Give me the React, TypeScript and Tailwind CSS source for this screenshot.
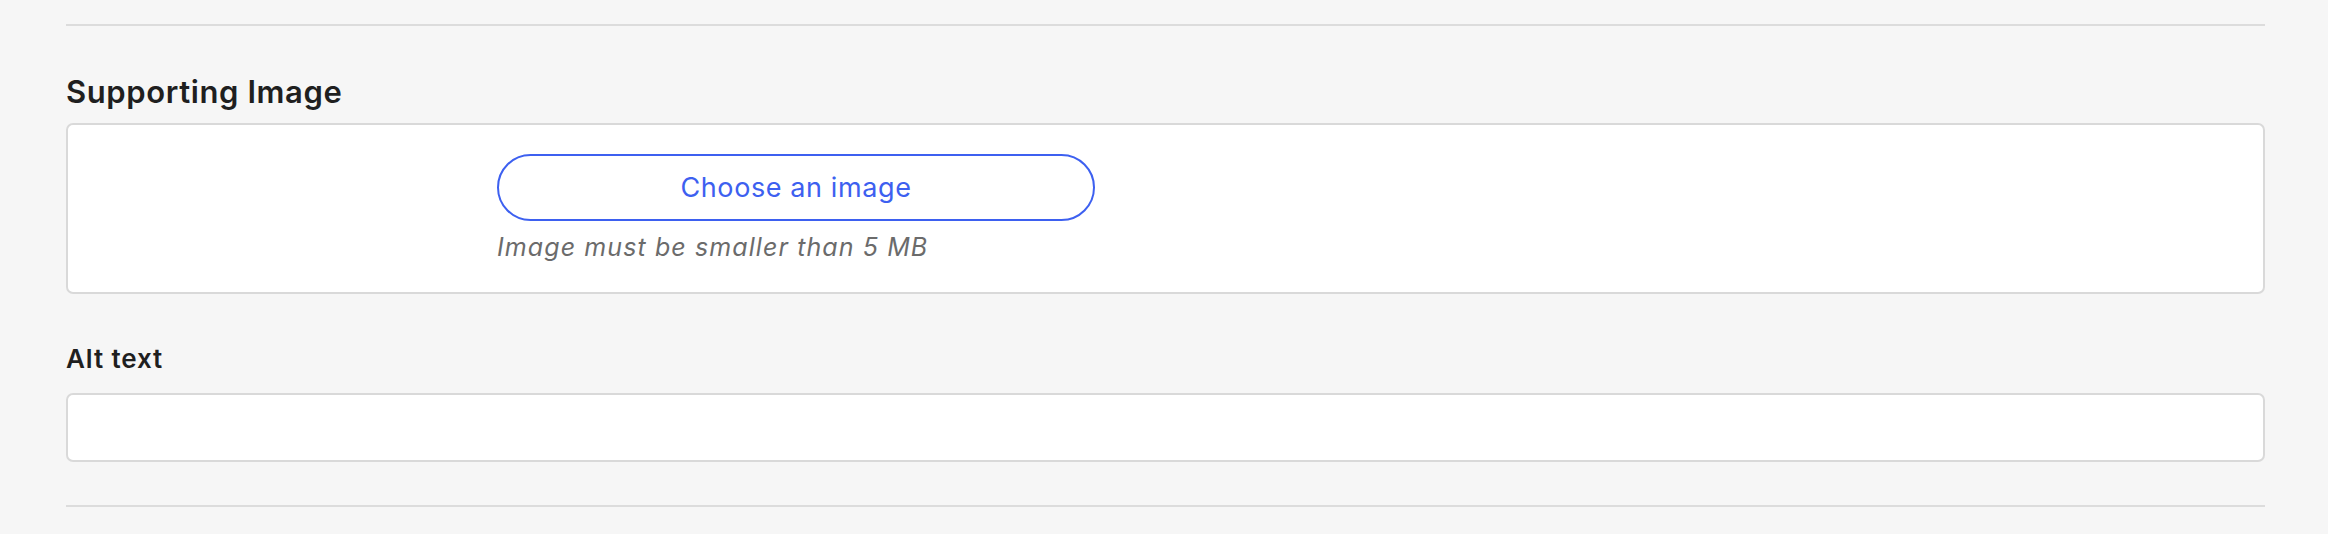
export default function App() {
  return (
    <div
      className="min-h-[534px] bg-[#f6f6f6] pt-[24px] pl-[66px] pr-[63px] text-[#1f1f1f]"
      style={{ fontFamily: "Inter, 'Noto Sans', sans-serif" }}
    >
      <div className="h-[2px] bg-[#dcdcdc]" />

      <h2 className="mt-[47px] mb-[12px] text-[31px] font-semibold leading-[38px] tracking-[0.6px]">
        Supporting Image
      </h2>
      <div className="flex h-[171px] flex-col items-start rounded-[7px] border-2 border-[#d9d9d9] bg-white pt-[29px] pl-[429px]">
        <button
          type="button"
          className="h-[67px] w-[598px] rounded-full border-2 border-[#3d60f0] bg-white text-[27px] leading-none tracking-[0.6px] text-[#3d60f0]"
        >
          Choose an image
        </button>
        <p className="mt-[11px] text-[25px] leading-[30px] tracking-[1.1px] text-[#6b6b6b] italic">
          Image must be smaller than 5 MB
        </p>
      </div>

      <label className="mt-[49px] mb-[18px] block text-[26px] font-semibold leading-[32px] tracking-[0.9px]">
        Alt text
      </label>
      <input
        type="text"
        className="block h-[69px] w-full rounded-[7px] border-2 border-[#d9d9d9] bg-white px-4 text-[25px] outline-none"
      />

      <div className="mt-[43px] h-[2px] bg-[#dcdcdc]" />
    </div>
  );
}
